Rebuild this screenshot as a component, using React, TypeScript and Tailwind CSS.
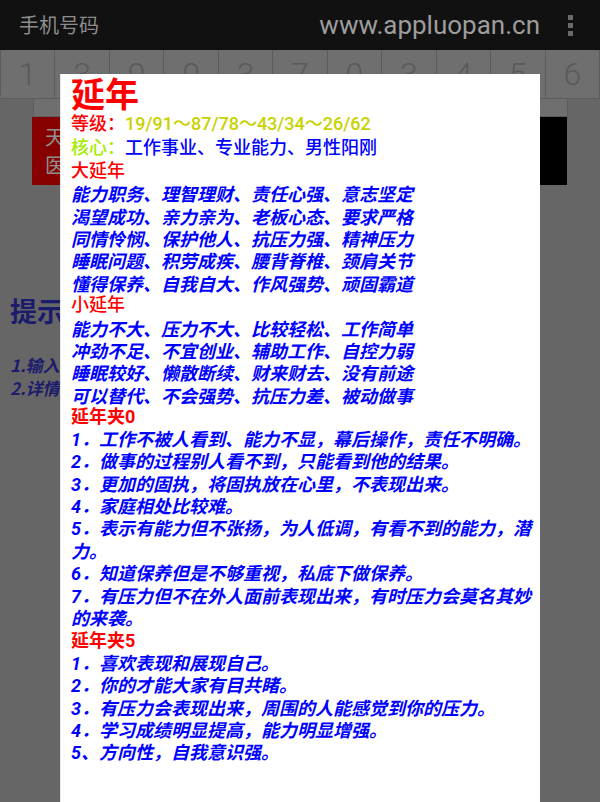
import React from "react";

const cjk = { fontFamily: '"Noto Sans CJK SC", "Noto Sans CJK JP", sans-serif' };
const mixed = { fontFamily: 'Roboto, "Noto Sans CJK SC", sans-serif' };

const digits = ["1", "3", "9", "0", "3", "7", "0", "3", "4", "5", "6"];

const bigYan = [
  "能力职务、理智理财、责任心强、意志坚定",
  "渴望成功、亲力亲为、老板心态、要求严格",
  "同情怜悯、保护他人、抗压力强、精神压力",
  "睡眠问题、积劳成疾、腰背脊椎、颈肩关节",
  "懂得保养、自我自大、作风强势、顽固霸道",
];

const smallYan = [
  "能力不大、压力不大、比较轻松、工作简单",
  "冲劲不足、不宜创业、辅助工作、自控力弱",
  "睡眠较好、懒散断续、财来财去、没有前途",
  "可以替代、不会强势、抗压力差、被动做事",
];

const jia0 = [
  "1．工作不被人看到、能力不显，幕后操作，责任不明确。",
  "2．做事的过程别人看不到，只能看到他的结果。",
  "3．更加的固执，将固执放在心里，不表现出来。",
  "4．家庭相处比较难。",
  "5．表示有能力但不张扬，为人低调，有看不到的能力，潜",
  "力。",
  "6．知道保养但是不够重视，私底下做保养。",
  "7．有压力但不在外人面前表现出来，有时压力会莫名其妙",
  "的来袭。",
];

const jia5 = [
  "1．喜欢表现和展现自己。",
  "2．你的才能大家有目共睹。",
  "3．有压力会表现出来，周围的人能感觉到你的压力。",
  "4．学习成绩明显提高，能力明显增强。",
  "5、方向性，自我意识强。",
];

function BlueLines({ lines }: { lines: string[] }) {
  return (
    <>
      {lines.map((l, i) => (
        <div key={i} className="font-bold italic text-[#0000ff]">
          {l}
        </div>
      ))}
    </>
  );
}

function SubHead({ children, bold }: { children: React.ReactNode; bold?: boolean }) {
  return <div className={bold ? "font-bold text-[#ff0000]" : "font-medium text-[#ff0000]"}>{children}</div>;
}

export default function App() {
  return (
    <div className="relative h-[802px] w-[600px] overflow-hidden bg-[#666666]" style={cjk}>
      {/* action bar */}
      <div className="flex h-[50px] items-center bg-[#111111]">
        <div className="pl-[19px] text-[20px] text-[#8c8c8c]">手机号码</div>
        <div className="ml-auto text-[26px] text-[#9d9d9d]" style={mixed}>
          www.appluopan.cn
        </div>
        <div className="flex w-[60px] flex-col items-center gap-[3px]">
          <span className="h-[5px] w-[5px] bg-[#6a6a6a]" />
          <span className="h-[5px] w-[5px] bg-[#6a6a6a]" />
          <span className="h-[5px] w-[5px] bg-[#6a6a6a]" />
        </div>
      </div>

      {/* number cells */}
      <div className="grid h-[45px] grid-cols-11 border-l border-[#5c5c5c]">
        {digits.map((d, i) => (
          <div
            key={i}
            className="flex items-center justify-center border-b border-r border-[#5c5c5c] bg-[#6f6f6f] text-[32px] font-light text-[#5a5a5a]"
            style={mixed}
          >
            {d}
          </div>
        ))}
      </div>

      <div className="ml-[33px] mr-[32px] h-[22px] border-x border-b border-[#5c5c5c] bg-[#6f6f6f]" />

      <div className="ml-[32px] mr-[33px] flex h-[68px]">
        <div className="flex w-[260px] flex-col justify-center gap-[6px] bg-[#870000] pl-[13px] text-[20px] leading-[22px] text-[#8f8f8f]">
          <div>天</div>
          <div>医</div>
        </div>
        <div className="flex-1 bg-black" />
      </div>

      <div className="pl-[10px] pt-[110px]">
        <div className="text-[27px] font-bold leading-[32px] text-[#1c1c6c]">提示</div>
        <div className="mt-[26px] text-[17px] font-bold italic leading-[23px] text-[#1c1c6c]">1.输入</div>
        <div className="text-[17px] font-bold italic leading-[23px] text-[#1c1c6c]">2.详情</div>
      </div>

      {/* dialog */}
      <div className="absolute bottom-0 left-[60px] top-[74px] w-[480px] border-l border-[#e6e6e6] bg-white pl-[10px]">
        <div className="h-[37px] text-[34px] font-bold leading-[37px] text-[#ff0000]">延年</div>
        <div className="whitespace-nowrap text-[18px] leading-[22.4px]" style={mixed}>
          <div className="font-medium">
            <span className="text-[#ff0000]" style={cjk}>等级：</span>
            <span className="text-[#c8d200]">19/91～87/78～43/34～26/62</span>
          </div>
          <div className="font-medium">
            <span className="text-[#a3ec00]" style={cjk}>核心：</span>
            <span className="text-[#0000ff]" style={cjk}>工作事业、专业能力、男性阳刚</span>
          </div>
          <SubHead>大延年</SubHead>
          <div style={cjk}>
            <BlueLines lines={bigYan} />
          </div>
          <SubHead>小延年</SubHead>
          <div style={cjk}>
            <BlueLines lines={smallYan} />
          </div>
          <SubHead bold>延年夹0</SubHead>
          <BlueLines lines={jia0} />
          <SubHead bold>延年夹5</SubHead>
          <BlueLines lines={jia5} />
        </div>
      </div>
    </div>
  );
}
